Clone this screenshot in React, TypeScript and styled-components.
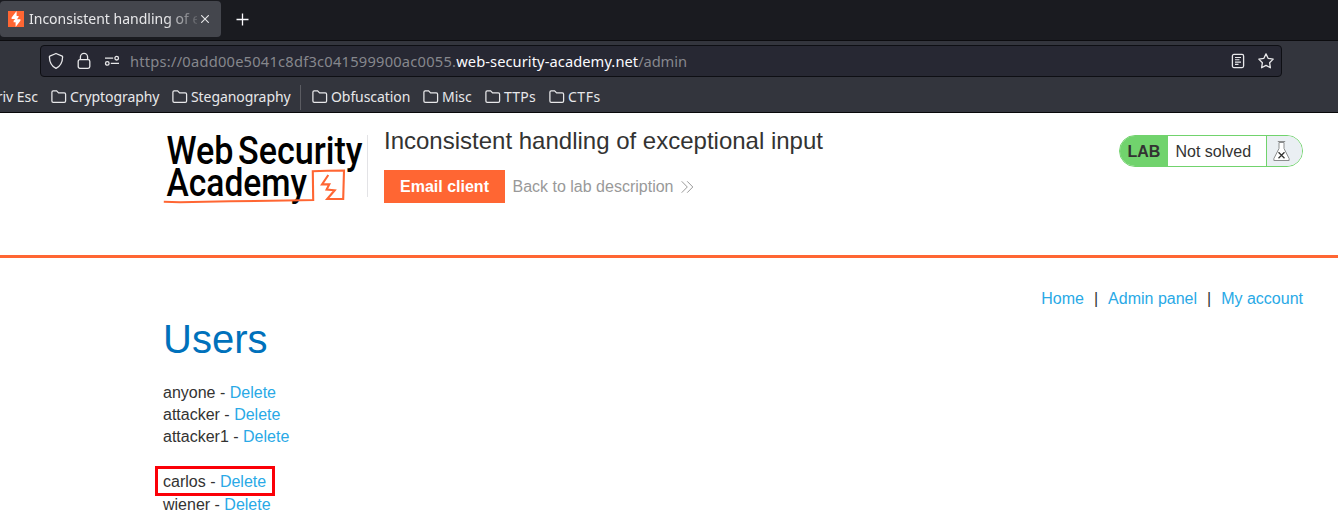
import React from "react";
import styled, { createGlobalStyle } from "styled-components";

const Global = createGlobalStyle`
  * { box-sizing: border-box; }
  html, body { margin: 0; height: 528px; overflow: hidden; background: #fff; }
`;

const Window = styled.div`
  width: 1338px;
  height: 528px;
  overflow: hidden;
  display: flex;
  flex-direction: column;
  font-family: "Liberation Sans", Arial, sans-serif;
  font-size: 16px;
  color: #333332;
`;

const Chrome = styled.div`
  flex: none;
  height: 113px;
  font-family: "Noto Sans", sans-serif;
  font-size: 14px;
  color: #e8e8ea;
  background: #33353d;
  border-bottom: 1px solid #08080a;
`;

const TabStrip = styled.div`
  height: 41px;
  display: flex;
  align-items: flex-start;
  background: #1a1b20;
  border-bottom: 1px solid #0c0c0f;
`;

const Tab = styled.div`
  width: 221px;
  height: 36px;
  margin-top: 1px;
  padding: 0 12px 0 8px;
  display: flex;
  align-items: center;
  background: #44464d;
  border-radius: 4px;
`;

const TabTitle = styled.span`
  flex: 1;
  margin: 0 4px 0 5px;
  overflow: hidden;
  white-space: nowrap;
  line-height: 20px;
  letter-spacing: 0;
  mask-image: linear-gradient(to right, #000 136px, transparent 174px);
`;

const NewTab = styled.svg`
  margin: 13px 0 0 15px;
`;

const AddressBar = styled.div`
  width: 1242px;
  height: 32px;
  margin: 4px 0 0 40px;
  padding: 0 7px;
  display: flex;
  align-items: center;
  background: #272833;
  border: 1px solid #0e0f14;
  border-radius: 4px;
`;

const BarIcon = styled.svg<{ $gap: number }>`
  flex: none;
  margin-right: ${(p) => p.$gap}px;
`;

const Url = styled.span`
  flex: 1;
  font-size: 14.67px;
  line-height: 20px;
  letter-spacing: 0.23px;
  color: #86878d;
  white-space: nowrap;
`;

const Domain = styled.span`
  color: #fbfbfe;
  letter-spacing: 0.08px;
`;

const Path = styled.span`
  letter-spacing: -0.1px;
`;

const Bookmarks = styled.div`
  display: flex;
  align-items: center;
  height: 34px;
  margin-top: 3px;
  white-space: nowrap;
`;

const Bookmark = styled.div<{ $width: number; $spacing?: number }>`
  flex: none;
  width: ${(p) => p.$width}px;
  display: flex;
  align-items: center;
  gap: 3px;
  line-height: 20px;
  letter-spacing: ${(p) => p.$spacing ?? 0}px;
`;

const CutBookmark = styled(Bookmark)`
  justify-content: flex-end;
  padding-right: 13px;
`;

const Separator = styled.div`
  width: 1px;
  height: 25px;
  margin-right: 11px;
  background: #5b5c62;
`;

const LabHeader = styled.header`
  flex: none;
  height: 145px;
  display: flex;
  align-items: flex-start;
  padding: 0 35px 0 163px;
  border-bottom: 3px solid #ff6633;
`;

const Logo = styled.svg`
  flex: none;
  margin-top: 17px;
`;

const Divider = styled.div`
  width: 1px;
  height: 62px;
  margin: 22px 16px 0 4px;
  background: #e3e3e6;
`;

const TitleBlock = styled.div`
  flex: 1;
`;

const Title = styled.h2`
  margin: 14px 0 15px;
  font-size: 24px;
  font-weight: 400;
  line-height: 28px;
`;

const Actions = styled.div`
  display: flex;
  align-items: center;
`;

const EmailButton = styled.a`
  width: 121px;
  height: 33px;
  line-height: 33px;
  text-align: center;
  font-weight: 700;
  color: #fff;
  background: #ff6633;
`;

const BackLink = styled.a`
  display: flex;
  align-items: center;
  gap: 8px;
  margin-left: 7.5px;
  color: #999;
`;

const Status = styled.div`
  width: 184px;
  height: 32px;
  margin-top: 22px;
  display: flex;
  line-height: 32px;
  border: 1px solid #71d36d;
  border-radius: 16px;
  overflow: hidden;
`;

const LabTag = styled.span`
  width: 48px;
  padding-left: 7.5px;
  font-weight: 700;
  background: #71d36d;
`;

const StatusText = styled.span`
  flex: 1;
  padding-left: 7.5px;
  line-height: 31px;
`;

const Flask = styled.span`
  width: 36px;
  padding: 4px 0 0 6px;
  line-height: 0;
  background: #eaeff3;
  border-left: 1px solid #71d36d;
`;

const Nav = styled.nav`
  display: flex;
  justify-content: flex-end;
  gap: 10px;
  padding: 31px 35px 0 0;
  line-height: 20px;
`;

const Link = styled.a`
  color: #29a9e6;
`;

const Main = styled.main`
  padding: 5px 0 0 163px;
`;

const Heading = styled.h1`
  margin: 0 0 18px;
  font-size: 40px;
  font-weight: 400;
  line-height: 50px;
  color: #0071bb;
`;

const UserRow = styled.div`
  height: 22px;
  line-height: 22px;
`;

const MarkedRow = styled.div`
  width: 120px;
  height: 30px;
  margin: 18px 0 -2px -8.5px;
  padding-left: 5.5px;
  line-height: 26px;
  border: 3px solid #fb0007;
`;

const users = ["anyone", "attacker", "attacker1"];

const Folder = () => (
  <svg width="16" height="16" viewBox="0 0 16 16" fill="none" stroke="#e8e8ea" strokeWidth="1.25">
    <path d="M.9 3.2Q.9 1.9 2.2 1.9H5.6L7.6 3.9H13.3Q14.6 3.9 14.6 5.2V12.1Q14.6 13.4 13.3 13.4H2.2Q.9 13.4 .9 12.1Z" />
  </svg>
);

const User = ({ name }: { name: string }) => (
  <>
    {name} - <Link>Delete</Link>
  </>
);

export default function App() {
  return (
    <Window>
      <Global />
      <Chrome>
        <TabStrip>
          <Tab>
            <svg width="16" height="16" viewBox="0 0 16 16">
              <rect width="16" height="16" fill="#ff6633" />
              <path d="M8.6 0L3.6 6.6V8.1H7.2L5.6 9.8V11.2H7.6V16L12.4 9.7V8.2H9L10.6 6V4.9H8.6Z" fill="#fff" />
            </svg>
            <TabTitle>Inconsistent handling of exceptional</TabTitle>
            <svg width="8" height="8" viewBox="0 0 8 8" stroke="#e8e8ea" strokeWidth="1.1">
              <path d="M.2 .2L7.8 7.8M7.8 .2L.2 7.8" />
            </svg>
          </Tab>
          <NewTab width="13" height="13" viewBox="0 0 13 13" stroke="#fbfbfe" strokeWidth="1.3">
            <path d="M6.5 .5V12.5M.5 6.5H12.5" />
          </NewTab>
        </TabStrip>
        <AddressBar>
          <BarIcon $gap={12} width="16" height="18" viewBox="0 0 16 18" fill="none" stroke="#e8e8ea" strokeWidth="1.3" strokeLinejoin="round">
            <path d="M8 1.5L14.2 4.1Q14.6 4.3 14.6 4.9C14.5 9.8 12.5 14 8 16.4C3.5 14 1.5 9.8 1.4 4.9Q1.4 4.3 1.8 4.1Z" />
          </BarIcon>
          <BarIcon $gap={12} width="16" height="18" viewBox="0 0 16 18" fill="none" stroke="#e8e8ea" strokeWidth="1.3">
            <rect x="2.2" y="7.7" width="11.6" height="8.6" rx="1.7" />
            <path d="M4.4 7.6V5A3.6 3.6 0 0 1 11.6 5V7.6" />
          </BarIcon>
          <BarIcon $gap={10} width="16" height="16" viewBox="0 0 16 16" fill="none" stroke="#e8e8ea" strokeWidth="1.3">
            <circle cx="12.7" cy="5.2" r="1.8" />
            <circle cx="3.3" cy="10.4" r="1.8" />
            <path d="M1 5.2H9.2M6.8 10.4H15" />
          </BarIcon>
          <Url>
            https://0add00e5041c8df3c041599900ac0055.<Domain>web-security-academy.net</Domain><Path>/admin</Path>
          </Url>
          <BarIcon $gap={12} width="16" height="16" viewBox="0 0 16 16" fill="none" stroke="#e8e8ea" strokeWidth="1.3">
            <rect x="2.4" y="1.4" width="11.2" height="13.2" rx="1.5" />
            <path d="M5 4.5H11M5 6.8H9.5M5 9.1H11M5 11.4H8.5" strokeWidth="1.1" />
          </BarIcon>
          <BarIcon $gap={0} width="16" height="16" viewBox="0 0 16 16" fill="none" stroke="#e8e8ea" strokeWidth="1.3" strokeLinejoin="round">
            <path d="M8 .9L10.1 5.3L15.2 6.1L11.6 9.7L12.4 14.8L8 12.4L3.6 14.8L4.4 9.7L.8 6.1L5.9 5.3Z" />
          </BarIcon>
        </AddressBar>
        <Bookmarks>
          <CutBookmark $width={51}>Priv Esc</CutBookmark>
          <Bookmark $width={121} $spacing={-0.08}><Folder />Cryptography</Bookmark>
          <Bookmark $width={128} $spacing={-0.08}><Folder />Steganography</Bookmark>
          <Separator />
          <Bookmark $width={111} $spacing={-0.08}><Folder />Obfuscation</Bookmark>
          <Bookmark $width={62}><Folder />Misc</Bookmark>
          <Bookmark $width={64} $spacing={0.2}><Folder />TTPs</Bookmark>
          <Bookmark $width={64} $spacing={0.5}><Folder />CTFs</Bookmark>
        </Bookmarks>
      </Chrome>

      <LabHeader>
        <Logo width="200" height="80" viewBox="163 130 200 80">
          <g fill="#000" fontFamily="Roboto, sans-serif" fontWeight="500" fontSize="38">
            <text x="166.5" y="163.5" textLength="67" lengthAdjust="spacingAndGlyphs">Web</text>
            <text x="238" y="163.5" textLength="124.5" lengthAdjust="spacingAndGlyphs">Security</text>
            <text x="166.5" y="196" textLength="140.5" lengthAdjust="spacingAndGlyphs">Academy</text>
          </g>
          <path d="M163.8 201.8L180 202.2L230 201.2L270 200.8L301 200.2L313.2 200L312.8 171.2L327 170.8L344 170.5L343.2 199L327.2 199L334.7 190.3L326.6 189.6L329.3 184.3L322 184.4L328.3 175" fill="none" stroke="#ff6633" strokeWidth="2.1" />
        </Logo>
        <Divider />
        <TitleBlock>
          <Title>Inconsistent handling of exceptional input</Title>
          <Actions>
            <EmailButton>Email client</EmailButton>
            <BackLink>
              Back to lab description
              <svg width="13" height="12" viewBox="0 0 13 12" fill="none" stroke="#999" strokeWidth="1">
                <path d="M.7 .3L6.3 6L.7 11.7M6.2 .3L11.8 6L6.2 11.7" />
              </svg>
            </BackLink>
          </Actions>
        </TitleBlock>
        <Status>
          <LabTag>LAB</LabTag>
          <StatusText>Not solved</StatusText>
          <Flask>
            <svg width="17" height="22" viewBox="0 0 17 22" fill="#fff" stroke="#8b8d8e" strokeWidth="1">
              <path d="M6 2.5V8.5L.9 18.5V20.5H16.1V18.5L11 8.5V2.5Z" />
              <path d="M4.8 1.5H12.2" />
              <path d="M5.5 12.3L11.5 18.3M11.5 12.3L5.5 18.3" stroke="#333332" strokeWidth="1.3" />
            </svg>
          </Flask>
        </Status>
      </LabHeader>

      <Nav>
        <Link>Home</Link>
        <span>|</span>
        <Link>Admin panel</Link>
        <span>|</span>
        <Link>My account</Link>
      </Nav>
      <Main>
        <Heading>Users</Heading>
        {users.map((name) => (
          <UserRow key={name}><User name={name} /></UserRow>
        ))}
        <MarkedRow><User name="carlos" /></MarkedRow>
        <UserRow><User name="wiener" /></UserRow>
      </Main>
    </Window>
  );
}
